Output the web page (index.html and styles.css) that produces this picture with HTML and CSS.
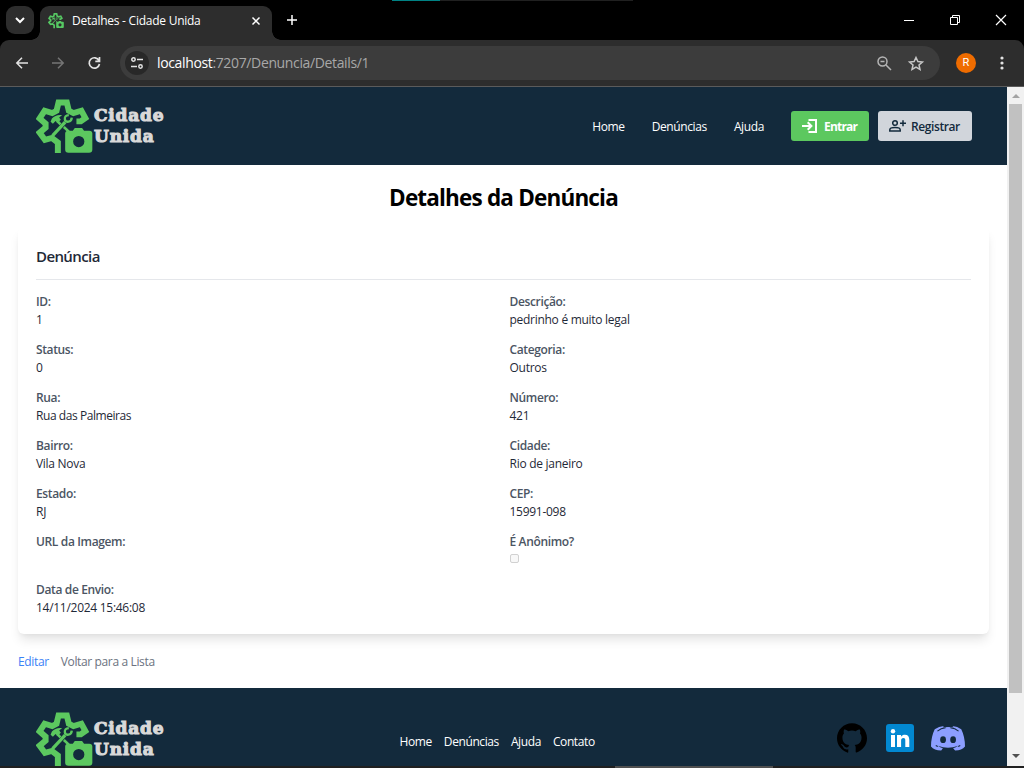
FILE: index.html
```html
<!DOCTYPE html>
<html lang="pt-BR">
<head>
<meta charset="utf-8">
<title>Detalhes - Cidade Unida</title>
<link rel="stylesheet" href="styles.css">
</head>
<body>
<svg class="defs" width="0" height="0">
  <symbol id="logo" viewBox="48 26 172 162">
    <path d="M114 190V157L96 143L75 149L59 127L77 112V100L59 84L74 61L97 68L110 61L116 36H141L147 61L161 68L185 61L197 83L183 93H170" fill="none" stroke="currentColor" stroke-width="18"/>
    <path d="M98 136L136 95" fill="none" stroke="currentColor" stroke-width="10"/>
    <path d="M147 74Q134 75 135 86Q136 95 146 94Q155 93 156 82" fill="none" stroke="currentColor" stroke-width="7"/>
    <path d="M92 94L96 84Q108 71 127 74L118 81L123 88L113 98L107 92L99 100Z" fill="currentColor"/>
    <path d="M112 92L122 102M132 110L147 124" fill="none" stroke="currentColor" stroke-width="8"/>
    <path fill-rule="evenodd" d="M145 121H159L165 113H187L193 121H209Q218 121 218 130V178Q218 188 208 188H146Q136 188 136 178V130Q136 121 145 121ZM177 137A17 17 0 1 0 177 171A17 17 0 1 0 177 137Z" fill="currentColor"/>
  </symbol>
</svg>
<div class="window">
  <div class="tabbar">
    <div class="loader"><i></i></div>
    <div class="tabsearch"><svg width="10" height="6" viewBox="0 0 10 6"><path d="M1 1l4 4 4-4" class="ln w2"/></svg></div>
    <div class="tab">
      <svg class="favicon" width="16" height="17"><use href="#logo"/></svg>
      <span class="tabtitle">Detalhes - Cidade Unida</span>
      <svg width="8" height="8" viewBox="0 0 8 8"><path d="M.5.5l7 7M7.500.5l-7 7" class="ln w15"/></svg>
    </div>
    <svg class="newtab" width="10" height="10" viewBox="0 0 10 10"><path d="M5 0v10M0 5h10" class="ln w15"/></svg>
    <div class="wincontrols">
      <svg width="10" height="12" viewBox="0 0 10 12"><path d="M0 6.500h10" class="ln"/></svg>
      <svg width="10" height="10" viewBox="0 0 10 10"><path d="M.5 2.500h7v7h-7zM2.500 2.500v-2h7v7h-2" class="ln"/></svg>
      <svg width="10" height="10" viewBox="0 0 10 10"><path d="M0 0l10 10M10 0L0 10" class="ln w12"/></svg>
    </div>
  </div>
  <div class="toolbar">
    <svg width="12" height="12" viewBox="0 0 12 12"><path d="M12 6H1M6 .7L.8 6 6 11.300" class="ln w15"/></svg>
    <svg class="dim" width="12" height="12" viewBox="0 0 12 12"><path d="M0 6h11M6 .7L11.200 6 6 11.300" class="ln w15"/></svg>
    <svg width="14" height="14" viewBox="0 0 14 14"><path d="M11 4.500A5.200 5.200 0 1 0 11.500 8M11.500 1v4.300H7.300" class="ln w17"/></svg>
    <div class="omnibox">
      <div class="siteinfo"><svg width="12" height="12" viewBox="0 0 12 12"><circle cx="2.500" cy="2.500" r="1.700" class="ln w15"/><circle cx="9.500" cy="9.500" r="1.700" class="ln w15"/><path d="M6 2.500h6M0 9.500h6" class="ln w15"/></svg></div>
      <span class="url"><b>localhost</b>:7207/Denuncia/Details/1</span>
      <svg class="zoomicon" width="15" height="15" viewBox="0 0 15 15"><circle cx="5.500" cy="5.500" r="4.500" class="ln w15"/><path d="M3.500 5.500h4M9 9l5 5" class="ln w15"/></svg>
      <svg class="star" width="16" height="15" viewBox="0 0 16 15"><path d="M8 1.500l1.900 4.100 4.500.4-3.400 3 1 4.400L8 11.100l-4 2.300 1-4.400-3.400-3 4.500-.4z" class="ln w15"/></svg>
    </div>
    <div class="avatar">R</div>
    <svg class="kebab" width="4" height="14" viewBox="0 0 4 14"><circle cx="2" cy="2" r="1.600"/><circle cx="2" cy="7" r="1.600"/><circle cx="2" cy="12" r="1.600"/></svg>
  </div>
  <div class="viewport">
    <div class="page">
      <header class="header">
        <div class="brand"><svg width="57" height="54"><use href="#logo"/></svg><span>Cidade<br>Unida</span></div>
        <nav class="nav">
          <a>Home</a><a>Denúncias</a><a>Ajuda</a>
        </nav>
        <div class="btn login"><svg width="16" height="14" viewBox="0 0 16 14"><path d="M6.500 1H14v12H6.500M0 7h9M5.700 3.300L9.400 7l-3.700 3.700" fill="none" stroke="currentColor" stroke-width="2"/></svg><span>Entrar</span></div>
        <div class="btn register"><svg width="17" height="12" viewBox="0 0 17 12"><circle cx="6" cy="3" r="2.300" fill="none" stroke="currentColor" stroke-width="1.500"/><path d="M.8 11V9.800Q.8 7.600 6 7.600T11.200 9.800V11ZM14 .3v6M11 3.300h6" fill="none" stroke="currentColor" stroke-width="1.500"/></svg><span>Registrar</span></div>
      </header>
      <main class="main">
        <h1>Detalhes da Denúncia</h1>
        <section class="card">
          <h2>Denúncia</h2>
          <dl>
            <div><dt>ID:</dt><dd>1</dd></div><div><dt>Descrição:</dt><dd>pedrinho é muito legal</dd></div>
            <div><dt>Status:</dt><dd>0</dd></div><div><dt>Categoria:</dt><dd>Outros</dd></div>
            <div><dt>Rua:</dt><dd class="tight">Rua das Palmeiras</dd></div><div><dt>Número:</dt><dd>421</dd></div>
            <div><dt>Bairro:</dt><dd>Vila Nova</dd></div><div><dt>Cidade:</dt><dd>Rio de janeiro</dd></div>
            <div><dt>Estado:</dt><dd>RJ</dd></div><div><dt>CEP:</dt><dd>15991-098</dd></div>
            <div><dt>URL da Imagem:</dt><dd></dd></div><div><dt>É Anônimo?</dt><dd><span class="check"></span></dd></div>
            <div><dt>Data de Envio:</dt><dd>14/11/2024 15:46:08</dd></div>
          </dl>
        </section>
        <div class="actions"><a class="edit">Editar</a><a>Voltar para a Lista</a></div>
      </main>
      <footer class="footer">
        <div class="brand"><svg width="57" height="54"><use href="#logo"/></svg><span>Cidade<br>Unida</span></div>
        <nav class="footnav"><a>Home</a><a>Denúncias</a><a>Ajuda</a><a>Contato</a></nav>
        <div class="social">
          <svg width="30" height="30" viewBox="0 0 24 24"><path d="M12 .297c-6.630 0-12 5.373-12 12 0 5.303 3.438 9.800 8.205 11.385.6.113.82-.258.82-.577 0-.285-.01-1.040-.015-2.040-3.338.724-4.042-1.610-4.042-1.610C4.422 18.070 3.633 17.700 3.633 17.700c-1.087-.744.084-.729.084-.729 1.205.084 1.838 1.236 1.838 1.236 1.070 1.835 2.809 1.305 3.495.998.108-.776.417-1.305.76-1.605-2.665-.3-5.466-1.332-5.466-5.930 0-1.310.465-2.380 1.235-3.220-.135-.303-.54-1.523.105-3.176 0 0 1.005-.322 3.300 1.230.96-.267 1.980-.399 3-.405 1.020.006 2.040.138 3 .405 2.280-1.552 3.285-1.230 3.285-1.230.645 1.653.24 2.873.12 3.176.765.84 1.230 1.910 1.230 3.220 0 4.610-2.805 5.625-5.475 5.920.42.36.81 1.096.81 2.220 0 1.606-.015 2.896-.015 3.286 0 .315.21.69.825.57C20.565 22.092 24 17.592 24 12.297c0-6.627-5.373-12-12-12"/></svg>
          <svg width="28" height="28" viewBox="0 0 28 28"><rect width="28" height="28" rx="3" fill="#0288d1"/><g fill="#fff"><circle cx="7" cy="7.200" r="2.200"/><path d="M5 11h4v12H5zM11 11h4v1.700c1-1.400 2.200-2 3.900-2 3 0 4.400 1.900 4.400 5V23h-4v-6.500c0-1.600-.6-2.400-1.900-2.400-1.500 0-2.300 1-2.300 2.700V23H11z"/></g></svg>
          <svg class="discord" width="34" height="25" viewBox="0 0 100 73"><path fill="#8c9eff" d="M38 0L34 4Q50 1 67 4L63 0Q78 1 89 9Q100 31 100 60Q91 72 71 72L65 65Q73 63 80 58Q50 69 20 58Q27 63 35 65L30 72Q9 72 0 60Q0 31 11 9Q23 1 38 0Z"/><path fill="none" stroke="#132a3c" stroke-width="3" d="M19 15Q29 6 43 5M81 15Q71 6 57 5M14 57L20 60M86 57L80 60"/><ellipse cx="35.500" cy="40" rx="8.500" ry="10" fill="#132a3c"/><ellipse cx="65" cy="40" rx="8.500" ry="10" fill="#132a3c"/></svg>
        </div>
      </footer>
    </div>
    <div class="scrollbar">
      <svg width="8" height="4" viewBox="0 0 8 4"><path d="M0 4l4-4 4 4z" fill="#a3a3a3"/></svg>
      <div class="thumb"></div>
      <svg class="down" width="8" height="4" viewBox="0 0 8 4"><path d="M0 0l4 4 4-4z" fill="#505050"/></svg>
    </div>
  </div>
  <div class="strip"><i></i></div>
</div>
</body>
</html>
```
FILE: styles.css
```css
* { box-sizing: border-box; }
body { margin: 0; font: 12px/18px "Segoe UI", "Open Sans", sans-serif; letter-spacing: -.28px; color: #1f2937; }
svg { display: block; flex: none; overflow: visible; }
.defs { position: absolute; }
.window { width: 1024px; height: 768px; background: #000; display: flex; flex-direction: column; overflow: hidden; }
.ln { fill: none; stroke: currentColor; stroke-width: 1; }
.w12 { stroke-width: 1.2; }
.w15 { stroke-width: 1.5; }
.w17 { stroke-width: 1.7; }
.w2 { stroke-width: 2; }

.tabbar { height: 40px; position: relative; display: flex; align-items: center; color: #fff; padding-left: 6px; flex: none; }
.loader { position: absolute; left: 392px; top: 0; width: 241px; height: 1px; background: #202020; }
.loader i { display: block; width: 48px; height: 1px; background: #008284; }
.tabsearch { width: 28px; height: 28px; border-radius: 9px; background: #2d2d2d; display: flex; align-items: center; justify-content: center; }
.tab { position: relative; margin-left: 6px; align-self: flex-end; width: 232px; height: 34px; border-radius: 9px 9px 0 0; background: #2d2d2d; display: flex; align-items: center; padding: 0 12px 5px 8px; }
.tab::before, .tab::after { content: ""; position: absolute; bottom: 0; width: 9px; height: 9px; }
.tab::before { left: -9px; background: radial-gradient(circle at 0 0, transparent 8.5px, #2d2d2d 9px); }
.tab::after { right: -9px; background: radial-gradient(circle at 100% 0, transparent 8.5px, #2d2d2d 9px); }
.favicon { color: #56c863; }
.tabtitle { margin-left: 8px; flex: 1; white-space: nowrap; letter-spacing: -.25px; }
.newtab { margin-left: 15px; }
.wincontrols { margin-left: auto; display: flex; align-items: center; gap: 36px; padding-right: 18px; }

.toolbar { height: 47px; flex: none; background: #2d2d2d; border-bottom: 1px solid #5b5b5b; border-radius: 9px 9px 0 0; display: flex; align-items: center; padding-left: 16px; gap: 24px; color: #e3e3e3; }
.toolbar .dim { color: #757575; }
.omnibox { margin-left: -6px; width: 820px; height: 34px; border-radius: 17px; background: #3c3c3c; display: flex; align-items: center; padding: 0 16px 0 5px; margin-right: -8px; }
.siteinfo { width: 24px; height: 24px; border-radius: 50%; background: #282828; display: flex; align-items: center; justify-content: center; }
.url { margin-left: 8px; flex: 1; font-size: 14px; letter-spacing: -.36px; color: #a8a8a8; }
.url b { font-weight: 400; color: #fff; }
.zoomicon { color: #b5b5b5; margin-right: 16px; }
.star { color: #c7c7c7; }
.avatar { width: 20px; height: 20px; border-radius: 50%; background: #ef6c00; color: #fff; font: 11px/20px Roboto, sans-serif; text-align: center; letter-spacing: 0; }
.kebab { fill: #e3e3e3; }

.viewport { height: 679px; flex: none; display: flex; }
.page { width: 1007px; background: #fff; overflow: hidden; display: flex; flex-direction: column; }
.header { height: 78px; flex: none; background: #132a3c; display: flex; align-items: center; padding: 0 35px 0 36px; color: #fff; }
.brand { display: flex; align-items: center; gap: 1px; color: #5cc85f; width: 140px; height: 54px; }
.brand span { color: #d9d9d9; font: bold 17px/21px "DejaVu Serif", serif; letter-spacing: .8px; -webkit-text-stroke: 1.1px #d9d9d9; padding-bottom: 1px; }
.nav { margin-left: auto; display: flex; gap: 27px; margin-right: 27px; letter-spacing: -.38px; padding-top: 2px; }
.btn { height: 30px; border-radius: 3px; display: flex; align-items: center; font-weight: 600; padding-left: 11px; letter-spacing: -.4px; }
.btn span { padding-top: 2px; }
.login { width: 78px; background: #5cc85f; gap: 6px; font-weight: 700; }
.login span { letter-spacing: -.8px; }
.register { width: 94px; margin-left: 9px; background: #d1d5db; color: #132a3c; gap: 5px; }

.main { height: 523px; flex: none; padding: 18px 18px 0; }
h1 { margin: 0 0 17px; font-size: 22.5px; line-height: 29px; font-weight: 700; text-align: center; color: #000; letter-spacing: -.82px; height: 27px; }
.card { height: 407px; border-radius: 6px; padding: 18px; background: #fff; box-shadow: 0 8px 11px -2px rgba(0,0,0,.1), 0 3px 5px -2px rgba(0,0,0,.05); }
h2 { margin: 0 0 13px; height: 35px; border-bottom: 1px solid #e5e7eb; font-size: 15px; line-height: 23px; font-weight: 600; letter-spacing: -.6px; }
dl { margin: 0; display: grid; grid-template-columns: 1fr 1fr; gap: 12px; }
dl > div { height: 36px; }
dt { color: #4b5563; font-weight: 600; letter-spacing: -.36px; }
dd { margin: 0; }
.tight { letter-spacing: -.44px; }
.check { display: block; width: 9px; height: 9px; border: 1px solid #d1d1d1; border-radius: 2px; background: #f8f8f8; margin-top: 3px; }
.actions { display: flex; gap: 12px; margin-top: 19px; color: #6b7280; letter-spacing: -.36px; }
.edit { color: #3b82f6; }
.footer { height: 90px; flex: none; background: #132a3c; display: flex; align-items: flex-start; padding: 24px 42px 0 36px; color: #fff; }
.footnav { display: flex; gap: 12px; margin: 21px auto 0 223.5px; letter-spacing: -.4px; }
.social { display: flex; align-items: center; gap: 19px; height: 52px; }
.discord { margin-left: -2px; }

.scrollbar { width: 17px; background: #f1f1f1; display: flex; flex-direction: column; align-items: center; padding: 7px 0 8px; }
.thumb { width: 13px; height: 589px; margin-top: 6px; background: #c1c1c1; }
.down { margin-top: auto; }
.strip { height: 2px; background: #202020; }
.strip i { display: block; margin-left: 615px; width: 158px; height: 2px; background: #505050; }
```
